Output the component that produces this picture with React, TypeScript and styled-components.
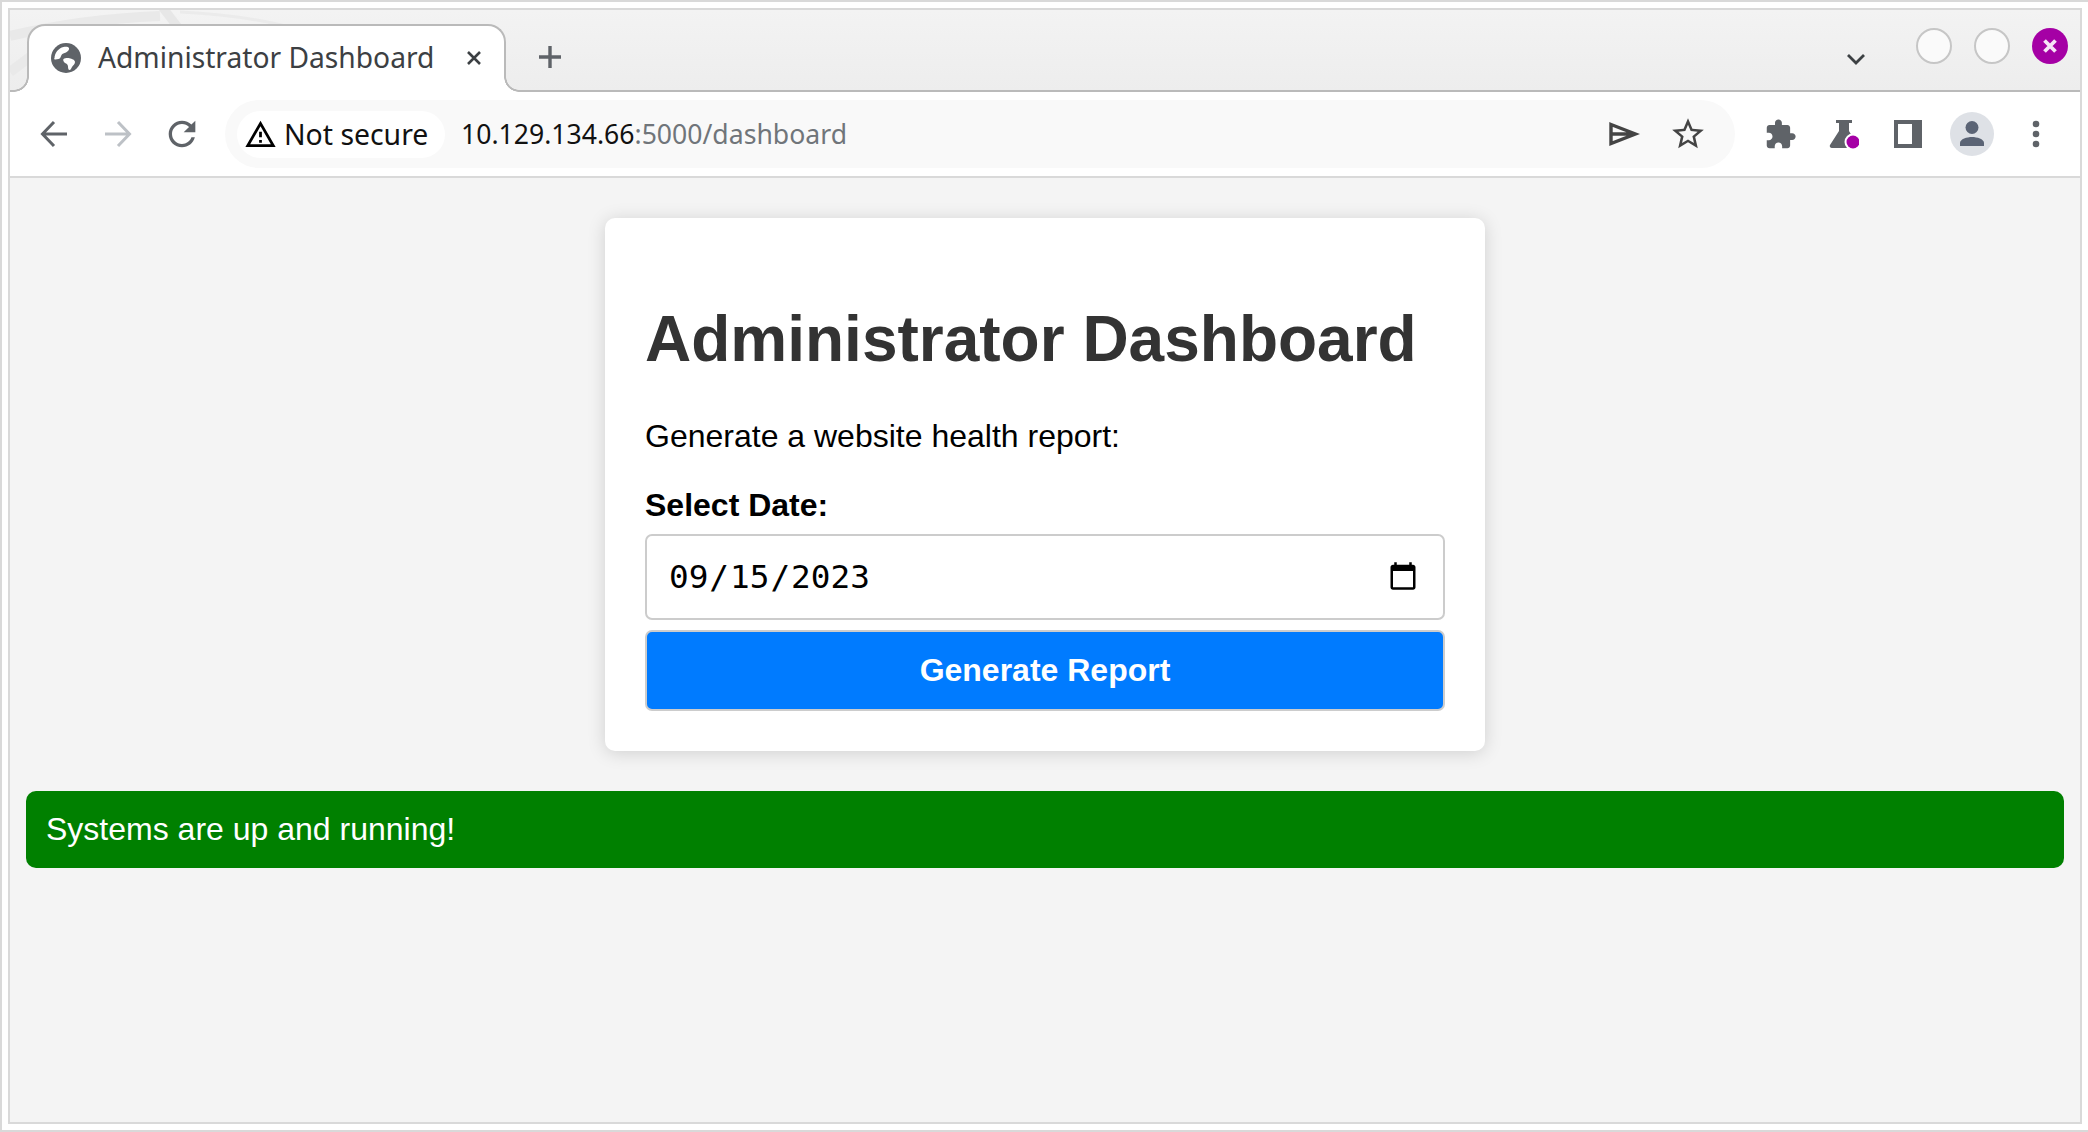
import styled, { createGlobalStyle } from "styled-components";

const GlobalStyle = createGlobalStyle`
  html, body {
    margin: 0;
    padding: 0;
    background: #fff;
    font-family: "Liberation Sans", Arial, sans-serif;
  }
`;

export default function App() {
  return (
    <>
      <GlobalStyle />
      <Screen>
        <Browser>
          <TabStrip>
            <Wallpaper viewBox="0 0 320 80" fill="none">
              <path d="M0 26 C50 14 100 8 150 6" stroke="#e9e9e9" strokeWidth="10" />
              <path d="M150 -6 L170 20" stroke="#e7e7e7" strokeWidth="9" />
              <path d="M170 2 C210 4 250 8 290 20" stroke="#ebebeb" strokeWidth="3" />
              <path d="M0 62 L24 44" stroke="#e9e9e9" strokeWidth="10" />
            </Wallpaper>
            <Tab>
              <svg width="30" height="30" viewBox="0 0 30 30">
                <circle cx="15" cy="15" r="15" fill="#5f6368" />
                <path
                  d="M3.500 15.500C3.500 10 7.500 5 12.500 4c2-.4 5-.4 5.500 1 .5 1.500-1 3.500-3 4.500-2 1-3.500 1-4.500 2.500-.8 1.500-1 3.500-3 4-2 .5-4.500 1-4.500-.5z"
                  fill="#fff"
                />
                <path
                  d="M12.500 16c1.500-1 4-1.200 6-.8 2.500.5 5.500 1.800 5.500 3.800 0 2-2 3.500-3 5-.8 1.200-1.200 3-2.500 3-1.200 0-1.500-2-1.500-3.500 0-1.500-1-2.500-2.500-3.200-1.500-.8-3-3-2-4.300z"
                  fill="#fff"
                />
              </svg>
              <TabTitle>Administrator Dashboard</TabTitle>
              <TabClose width="16" height="16" viewBox="0 0 16 16">
                <path d="M2 2l12 12M14 2L2 14" stroke="#3c4043" strokeWidth="2.600" />
              </TabClose>
            </Tab>
            <NewTab width="24" height="24" viewBox="0 0 24 24">
              <path d="M12 1v22M1 12h22" stroke="#5f6368" strokeWidth="3.400" />
            </NewTab>
            <Spacer />
            <TabListArrow width="20" height="12" viewBox="0 0 20 12">
              <path d="M2 2l8 8 8-8" fill="none" stroke="#3c4043" strokeWidth="2.800" />
            </TabListArrow>
            <WindowControls>
              <WindowButton />
              <WindowButton />
              <WindowButton $close>
                <svg width="16" height="16" viewBox="0 0 16 16">
                  <path d="M2.500 2.500l11 11M13.500 2.500l-11 11" stroke="#f6e3f6" strokeWidth="3.800" />
                </svg>
              </WindowButton>
            </WindowControls>
          </TabStrip>

          <Toolbar>
            <ToolButton>
              <svg width="28" height="28" viewBox="0 0 28 28" fill="none">
                <path d="M27 14H3M14 2L2.500 14 14 26" stroke="#5f6368" strokeWidth="3" />
              </svg>
            </ToolButton>
            <ToolButton>
              <svg width="28" height="28" viewBox="0 0 28 28" fill="none">
                <path d="M1 14h24M14 2l11.500 12L14 26" stroke="#bdc1c6" strokeWidth="3" />
              </svg>
            </ToolButton>
            <ToolButton>
              <svg width="40" height="40" viewBox="0 0 24 24">
                <path
                  d="M17.650 6.350C16.200 4.900 14.210 4 12 4c-4.420 0-7.990 3.580-7.990 8s3.570 8 7.990 8c3.730 0 6.840-2.550 7.730-6h-2.080c-.82 2.330-3.040 4-5.650 4-3.310 0-6-2.690-6-6s2.690-6 6-6c1.660 0 3.140.69 4.220 1.780L13 11h7V4l-2.350 2.350z"
                  fill="#5f6368"
                />
              </svg>
            </ToolButton>
            <Omnibox>
              <SecurityChip>
                <svg width="33" height="33" viewBox="0 0 24 24">
                  <path
                    d="M12 5.990L19.530 19H4.470L12 5.990M12 2L1 21h22L12 2zm1 14h-2v2h2v-2zm0-6h-2v4h2v-4z"
                    fill="#000"
                  />
                </svg>
                Not secure
              </SecurityChip>
              <Url>
                10.129.134.66<UrlRest>:5000/dashboard</UrlRest>
              </Url>
              <ToolButton>
                <svg width="32" height="26" viewBox="0 0 32 26" fill="none">
                  <path
                    d="M3 3.500L27.500 13 3 22.500V3.500zM3 13h24"
                    stroke="#444"
                    strokeWidth="3.400"
                  />
                </svg>
              </ToolButton>
              <ToolButton>
                <svg width="38" height="38" viewBox="0 0 24 24">
                  <path
                    d="M22 9.240l-7.190-.62L12 2 9.190 8.630 2 9.240l5.460 4.730L5.820 21 12 17.270 18.180 21l-1.630-7.030L22 9.240zM12 15.400l-3.760 2.270 1-4.280-3.320-2.880 4.380-.38L12 6.100l1.710 4.040 4.380.38-3.320 2.880 1 4.280L12 15.400z"
                    fill="#444"
                  />
                </svg>
              </ToolButton>
            </Omnibox>
            <ToolActions>
              <ToolButton>
                <svg width="33" height="33" viewBox="0 0 24 24">
                  <path
                    d="M20.500 11H19V7c0-1.100-.9-2-2-2h-4V3.500C13 2.120 11.880 1 10.500 1S8 2.120 8 3.500V5H4c-1.100 0-1.990.9-1.990 2v3.800H3.500c1.490 0 2.700 1.210 2.700 2.700s-1.210 2.700-2.700 2.700H2V20c0 1.100.9 2 2 2h3.800v-1.500c0-1.490 1.210-2.700 2.700-2.700 1.490 0 2.700 1.210 2.700 2.700V22H17c1.100 0 2-.9 2-2v-4h1.500c1.380 0 2.500-1.120 2.500-2.500S21.880 11 20.500 11z"
                    fill="#5f6368"
                  />
                </svg>
              </ToolButton>
              <ToolButton>
                <svg width="30" height="30" viewBox="0 0 30 30">
                  <path
                    d="M7 1h16v3h-3v8l8.500 14c.8 1.500-.2 3-2 3H3c-1.800 0-2.800-1.500-2-3L10 12V4H7V1z"
                    fill="#5f6368"
                  />
                  <circle cx="24" cy="23" r="8.500" fill="#fff" />
                  <circle cx="24" cy="23" r="6.500" fill="#a500a5" />
                </svg>
              </ToolButton>
              <ToolButton>
                <svg width="28" height="28" viewBox="0 0 28 28">
                  <path d="M0 0h28v28H0z M4 4v20h14V4z" fill="#5f6368" fillRule="evenodd" />
                </svg>
              </ToolButton>
              <ToolButton>
                <Avatar>
                  <svg width="24" height="25" viewBox="0 0 24 25">
                    <circle cx="12" cy="6.500" r="6.500" fill="#5b6475" />
                    <path d="M0 25v-3c0-4 7-6 12-6s12 2 12 6v3H0z" fill="#5b6475" />
                  </svg>
                </Avatar>
              </ToolButton>
              <ToolButton>
                <svg width="8" height="28" viewBox="0 0 8 28">
                  <circle cx="4" cy="4" r="3.300" fill="#5f6368" />
                  <circle cx="4" cy="14" r="3.300" fill="#5f6368" />
                  <circle cx="4" cy="24" r="3.300" fill="#5f6368" />
                </svg>
              </ToolButton>
            </ToolActions>
          </Toolbar>

          <Page>
            <Card>
              <Title>Administrator Dashboard</Title>
              <Intro>Generate a website health report:</Intro>
              <form onSubmit={(e) => e.preventDefault()}>
                <FieldLabel htmlFor="date">Select Date:</FieldLabel>
                <DateInput id="date" type="date" defaultValue="2023-09-15" />
                <SubmitButton type="submit">Generate Report</SubmitButton>
              </form>
            </Card>
            <StatusBanner>Systems are up and running!</StatusBanner>
          </Page>
        </Browser>
      </Screen>
    </>
  );
}

const Screen = styled.div`
  box-sizing: border-box;
  width: 2088px;
  height: 1132px;
  padding: 6px;
  border-top: 2px solid #d9d9d9;
  border-left: 2px solid #d9d9d9;
  border-bottom: 2px solid #d9d9d9;
  background: #fff;
  overflow: hidden;
`;

const Browser = styled.div`
  box-sizing: border-box;
  height: 100%;
  display: flex;
  flex-direction: column;
  border: 2px solid #d9d9d9;
  background: #f4f4f4;
`;

const TabStrip = styled.div`
  position: relative;
  z-index: 1;
  box-sizing: border-box;
  height: 82px;
  flex: none;
  display: flex;
  align-items: flex-end;
  padding-left: 17px;
  padding-right: 12px;
  border-bottom: 2px solid #bababa;
  background: linear-gradient(#f3f3f3, #ededed);
`;

const Wallpaper = styled.svg`
  position: absolute;
  left: 0;
  top: 0;
  width: 320px;
  height: 80px;
`;

const Tab = styled.div`
  position: relative;
  box-sizing: border-box;
  width: 479px;
  height: 68px;
  margin-bottom: -2px;
  display: flex;
  align-items: center;
  padding: 0 0 2px 22px;
  background: #fff;
  border: 2px solid #bababa;
  border-bottom: none;
  border-radius: 18px 18px 0 0;

  &::before,
  &::after {
    content: "";
    position: absolute;
    bottom: 0;
    width: 15px;
    height: 15px;
  }

  &::before {
    left: -15px;
    background: radial-gradient(
      circle 15px at 0 0,
      transparent 12.5px,
      #bababa 13px,
      #bababa 14.5px,
      #fff 15px
    );
  }

  &::after {
    right: -15px;
    background: radial-gradient(
      circle 15px at 100% 0,
      transparent 12.5px,
      #bababa 13px,
      #bababa 14.5px,
      #fff 15px
    );
  }
`;

const TabTitle = styled.span`
  margin: 0 0 3px 17px;
  font-family: "Noto Sans", sans-serif;
  font-size: 28.2px;
  color: #3c4043;
  white-space: nowrap;
`;

const TabClose = styled.svg`
  position: absolute;
  right: 22px;
  top: 24px;
`;

const NewTab = styled.svg`
  position: relative;
  margin: 0 0 21px 32px;
`;

const Spacer = styled.div`
  flex: 1;
`;

const TabListArrow = styled.svg`
  position: relative;
  margin: 0 50px 25px 0;
`;

const WindowControls = styled.div`
  position: relative;
  align-self: flex-start;
  margin-top: 18px;
  display: flex;
  gap: 22px;
`;

const WindowButton = styled.div<{ $close?: boolean }>`
  box-sizing: border-box;
  width: 36px;
  height: 36px;
  display: flex;
  align-items: center;
  justify-content: center;
  border-radius: 50%;
  background: ${({ $close }) => ($close ? "#a500a5" : "#fafafa")};
  border: ${({ $close }) => ($close ? "none" : "2px solid #c6c6c6")};
`;

const Toolbar = styled.div`
  box-sizing: border-box;
  height: 86px;
  flex: none;
  display: flex;
  align-items: center;
  padding: 0 12px;
  background: #fff;
  border-bottom: 2px solid #d9d9d9;
`;

const ToolButton = styled.div`
  width: 64px;
  height: 64px;
  flex: none;
  display: flex;
  align-items: center;
  justify-content: center;
`;

const Omnibox = styled.div`
  flex: 1;
  height: 68px;
  margin-left: 11px;
  display: flex;
  align-items: center;
  padding: 0 15px 0 12px;
  border-radius: 34px;
  background: #f9f9f9;
`;

const SecurityChip = styled.div`
  box-sizing: border-box;
  width: 208px;
  height: 47px;
  flex: none;
  display: flex;
  align-items: center;
  gap: 7px;
  padding: 0 0 0 7px;
  border-radius: 24px;
  background: #fff;
  font-family: "Noto Sans", sans-serif;
  font-size: 28.4px;
  color: #111;
  white-space: nowrap;
`;

const Url = styled.div`
  flex: 1;
  margin-left: 16px;
  font-family: "Noto Sans", sans-serif;
  font-size: 26.6px;
  color: #111;
  white-space: nowrap;
`;

const UrlRest = styled.span`
  color: #70757a;
`;

const ToolActions = styled.div`
  display: flex;
  margin-left: 13px;
`;

const Avatar = styled.div`
  width: 44px;
  height: 44px;
  display: flex;
  align-items: flex-end;
  justify-content: center;
  border-radius: 50%;
  background: #dee1e6;

  svg {
    margin-bottom: 10px;
  }
`;

const Page = styled.main`
  flex: 1;
  padding: 40px 16px 0;
  background: #f4f4f4;
`;

const Card = styled.section`
  box-sizing: border-box;
  width: 880px;
  height: 533px;
  margin: 0 auto;
  padding: 40px;
  background: #fff;
  border-radius: 10px;
  box-shadow: 0 2px 18px rgba(0, 0, 0, 0.15);
`;

const Title = styled.h1`
  margin: 44px 0 42px;
  font-size: 64px;
  font-weight: 700;
  color: #333;
  white-space: nowrap;
`;

const Intro = styled.p`
  margin: 0 0 32px;
  font-size: 32px;
  color: #000;
`;

const FieldLabel = styled.label`
  display: block;
  margin-bottom: 10px;
  font-size: 32px;
  font-weight: 700;
  color: #000;
`;

const DateInput = styled.input`
  display: block;
  box-sizing: border-box;
  width: 800px;
  height: 86px;
  padding: 0 21px;
  border: 2px solid #ccc;
  border-radius: 7px;
  background: #fff;
  font-family: "DejaVu Sans Mono", monospace;
  font-size: 32.7px;
  color: #000;

  &::-webkit-calendar-picker-indicator {
    width: 32px;
    height: 32px;
    padding: 0;
    margin: 0 3px 0 0;
  }
`;

const SubmitButton = styled.button`
  display: block;
  box-sizing: border-box;
  width: 800px;
  height: 81px;
  margin-top: 10px;
  border: 2px solid #ccc;
  border-radius: 7px;
  background: #007bff;
  color: #fff;
  font-family: "Liberation Sans", Arial, sans-serif;
  font-size: 32px;
  font-weight: 700;
`;

const StatusBanner = styled.div`
  box-sizing: border-box;
  height: 77px;
  margin-top: 40px;
  display: flex;
  align-items: center;
  padding: 0 20px;
  border-radius: 10px;
  background: #008000;
  color: #fff;
  font-size: 32px;
`;
